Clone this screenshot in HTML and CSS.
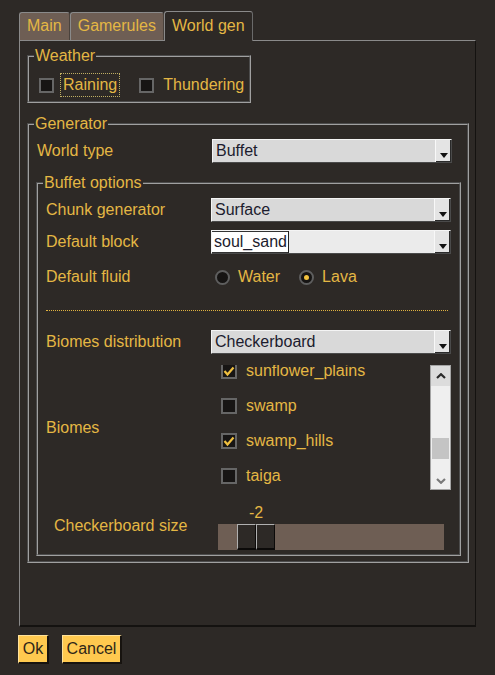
FILE: index.html
```html
<!DOCTYPE html>
<html lang="en">
<head>
<meta charset="utf-8">
<title>World gen</title>
<link rel="stylesheet" href="styles.css">
</head>
<body>
<div class="app">
  <div class="tabs">
    <div class="tab">Main</div>
    <div class="tab">Gamerules</div>
    <div class="tab active">World gen</div>
  </div>
  <div class="panel">
    <fieldset class="group weather">
      <legend>Weather</legend>
      <div class="weather-row">
        <div class="opt"><span class="cb"></span><span class="opt-text focus">Raining</span></div>
        <div class="opt opt2"><span class="cb"></span><span class="opt-text">Thundering</span></div>
      </div>
    </fieldset>
    <fieldset class="group generator">
      <legend>Generator</legend>
      <div class="gen-body">
        <div class="row r-world">
          <span class="lbl">World type</span>
          <div class="select"><span class="val">Buffet</span><span class="arrow"></span></div>
        </div>
        <fieldset class="group buffet">
          <legend>Buffet options</legend>
          <div class="buf-body">
            <div class="row r-chunk">
              <span class="lbl">Chunk generator</span>
              <div class="select"><span class="val">Surface</span><span class="arrow"></span></div>
            </div>
            <div class="row r-block">
              <span class="lbl">Default block</span>
              <div class="select edit"><span class="val"><span class="sel">soul_sand</span></span><span class="arrow"></span></div>
            </div>
            <div class="row r-fluid">
              <span class="lbl">Default fluid</span>
              <div class="radios">
                <span class="radio"></span><span class="r-text">Water</span>
                <span class="radio on r2"></span><span class="r-text">Lava</span>
              </div>
            </div>
            <div class="sep"></div>
            <div class="row r-dist">
              <span class="lbl">Biomes distribution</span>
              <div class="select"><span class="val">Checkerboard</span><span class="arrow"></span></div>
            </div>
            <div class="row r-biomes">
              <span class="lbl">Biomes</span>
              <div class="biomes">
                <div class="items">
                  <div class="item first"><span class="cb on"><svg viewBox="0 0 12 12" width="12" height="12"><polyline points="1.5,6 4.5,9.5 10.5,2.5" /></svg></span><span class="i-text">sunflower_plains</span></div>
                  <div class="item"><span class="cb"></span><span class="i-text">swamp</span></div>
                  <div class="item"><span class="cb on"><svg viewBox="0 0 12 12" width="12" height="12"><polyline points="1.5,6 4.5,9.5 10.5,2.5" /></svg></span><span class="i-text">swamp_hills</span></div>
                  <div class="item"><span class="cb"></span><span class="i-text">taiga</span></div>
                </div>
                <div class="scrollbar">
                  <div class="sb-btn up"><svg viewBox="0 0 10 6" width="10" height="6"><polyline points="1,5 5,1.2 9,5" /></svg></div>
                  <div class="sb-track"><div class="sb-thumb"></div></div>
                  <div class="sb-btn down"><svg viewBox="0 0 10 6" width="10" height="6"><polyline points="1,1 5,4.8 9,1" /></svg></div>
                </div>
              </div>
            </div>
            <div class="row r-checker">
              <span class="lbl indent">Checkerboard size</span>
              <div class="slider">
                <div class="slider-val">-2</div>
                <div class="track"><div class="thumb"><span></span><span></span></div></div>
              </div>
            </div>
          </div>
        </fieldset>
      </div>
    </fieldset>
  </div>
  <div class="buttons">
    <div class="btn btn-ok">Ok</div>
    <div class="btn btn-cancel">Cancel</div>
  </div>
</div>
</body>
</html>
```
FILE: styles.css
```css
* { box-sizing: border-box; }
html, body { margin: 0; padding: 0; }
body {
  background: #2d2926;
  font-family: "Liberation Sans", Arial, sans-serif;
  font-size: 16px;
  color: #e4b744;
  width: 495px;
  height: 675px;
  overflow: hidden;
}
.app { padding-top: 11px; }

/* Tabs */
.tabs { display: flex; align-items: flex-end; height: 29px; padding-left: 19px; }
.tab {
  height: 28px;
  padding: 0 7px;
  line-height: 26px;
  background: #6e5e54;
  border: 1px solid #8a8a8a;
  border-bottom: 0;
  border-right-color: #4a423c;
  border-radius: 3px 3px 0 0;
  white-space: nowrap;
}
.tab.active {
  height: 30px;
  line-height: 28px;
  margin-bottom: -1px;
  background: #2d2926;
  position: relative;
  z-index: 1;
  border-right-color: #6a6a6a;
}

/* Panel */
.panel {
  margin-left: 19px;
  width: 457px;
  height: 587px;
  border: 1px solid #8a8a8a;
  border-right-color: #141210;
  border-bottom: 2px solid #141210;
  padding: 6px 6px 0 7px;
}

fieldset.group {
  margin: 0;
  padding: 0;
  border: 2px groove #a0a0a0;
  min-width: 0;
}
fieldset.group > legend {
  margin-left: 5px;
  padding: 0 1px;
  line-height: 18px;
  font-size: 16px;
}

/* Weather */
fieldset.weather { width: 224px; margin-bottom: 12px; }
.weather-row { display: flex; align-items: center; padding: 8px 0 4px 10px; }
.opt { display: flex; align-items: center; }
.opt2 { margin-left: 19px; }
.cb {
  width: 15px;
  height: 15px;
  flex: none;
  background: #171514;
  border: 2px solid #666;
  display: flex;
  align-items: center;
  justify-content: center;
}
.cb svg { display: block; }
.cb svg polyline { fill: none; stroke: #f0c040; stroke-width: 2.2; }
.opt .cb { margin-right: 6px; }
.opt-text {
  padding: 0 2px;
  line-height: 22px;
  border: 1px dotted transparent;
}
.opt-text.focus { border-color: #bfae62; }

/* Generator */
.gen-body { padding: 0 6px 5px 7px; }
.row {
  display: grid;
  grid-template-columns: 1fr 240px;
  align-items: center;
  height: 24px;
}
.lbl { white-space: nowrap; }
.r-world { margin-top: 6px; padding-left: 1px; margin-right: 9px; }
fieldset.buffet { margin-top: 11px; }
.buf-body { padding: 0 8px 4px 8px; }
.r-chunk { margin-top: 6px; }
.r-block { margin-top: 8px; }
.r-fluid { margin-top: 11px; }
.sep { margin-top: 21px; margin-right: 3px; border-top: 1px dotted #e0b240; }
.r-dist { margin-top: 19px; }
.r-biomes { margin-top: 11px; height: 125px; }
.r-checker { margin-top: 14px; height: 46px; }
.indent { padding-left: 8px; padding-bottom: 3px; }

/* Select */
.select {
  height: 24px;
  display: flex;
  background: #d9d9d9;
  border: 1px solid;
  border-color: #f4f4f4 #4a4a4a #4a4a4a #f4f4f4;
  color: #1c1c2e;
}
.select .val { flex: 1; padding-left: 3px; line-height: 22px; white-space: nowrap; overflow: hidden; }
.select .arrow {
  width: 16px;
  flex: none;
  background: #e4e4e4;
  border-left: 1px solid #f8f8f8;
  box-shadow: inset -1px -1px 0 #2a2a2a;
  display: flex;
  align-items: flex-end;
  justify-content: center;
  padding-bottom: 4px;
}
.select .arrow::after {
  content: "";
  display: block;
  width: 0;
  height: 0;
  border-left: 4.5px solid transparent;
  border-right: 4.5px solid transparent;
  border-top: 5px solid #111;
}
.select.edit { background: #ebebeb; }
.select.edit .val { padding-left: 0; }
.select.edit .sel {
  display: inline-block;
  height: 22px;
  background: #fff;
  padding: 0 1px 0 2px;
  border-right: 1px solid #222;
  box-shadow: inset 0 1px 0 #333, inset 0 -1px 0 #333;
}

/* Radios */
.radios { display: flex; align-items: center; }
.radio {
  width: 15px;
  height: 15px;
  border-radius: 50%;
  border: 2px solid #5e5e5e;
  background: #161413;
  margin-left: 4px;
  display: flex;
  align-items: center;
  justify-content: center;
}
.radio.r2 { margin-left: 19px; }
.radio.on::after {
  content: "";
  width: 5px;
  height: 5px;
  border-radius: 50%;
  background: #f2c23e;
}
.r-text { margin-left: 8px; }

/* Biomes list */
.biomes { display: flex; height: 125px; }
.items { flex: 1; overflow: hidden; }
.item { height: 35px; display: flex; align-items: center; padding-left: 10px; white-space: nowrap; }
.item.first { margin-top: -12px; }
.item .cb { width: 16px; height: 16px; }
.i-text { margin-left: 9px; }
.scrollbar {
  width: 21px;
  flex: none;
  border: 1px solid #a4a4a4;
  background: #efefef;
  display: flex;
  flex-direction: column;
}
.sb-btn { height: 20px; display: flex; align-items: center; justify-content: center; flex: none; }
.sb-btn.up { background: #dcdcdc; }
.sb-btn svg { display: block; }
.sb-btn polyline { fill: none; stroke-width: 2.2; }
.sb-btn.up polyline { stroke: #2a2a2a; }
.sb-btn.down polyline { stroke: #7a7a7a; }
.sb-btn.down { align-items: flex-end; padding-bottom: 5px; }
.sb-track { flex: 1; }
.sb-thumb { margin: 52px 1px 0; height: 21px; background: #c4c4c4; }

/* Slider */
.slider { padding: 0 7px; }
.slider-val { margin-left: 19px; width: 38px; text-align: center; line-height: 18px; height: 18px; margin-bottom: 2px; }
.track { height: 26px; background: #6e5e54; }
.thumb { margin-left: 19px; width: 38px; height: 26px; display: flex; }
.thumb span {
  flex: 1;
  background: #2d2926;
  border: 1px solid;
  border-color: #b0b0b0 #0c0a09 #0c0a09 #b0b0b0;
  border-bottom-width: 2px;
}

/* Buttons */
.buttons { display: flex; gap: 13px; padding-left: 18px; margin-top: 8px; }
.btn {
  height: 29px;
  line-height: 26px;
  text-align: center;
  background: #ffc94f;
  color: #2e2618;
  border: 1px solid;
  border-color: #ffe29a #17130f #17130f #ffe29a;
  border-right-width: 2px;
  border-bottom-width: 2px;
}
.btn-ok { width: 31px; }
.btn-cancel { width: 60px; }
```
